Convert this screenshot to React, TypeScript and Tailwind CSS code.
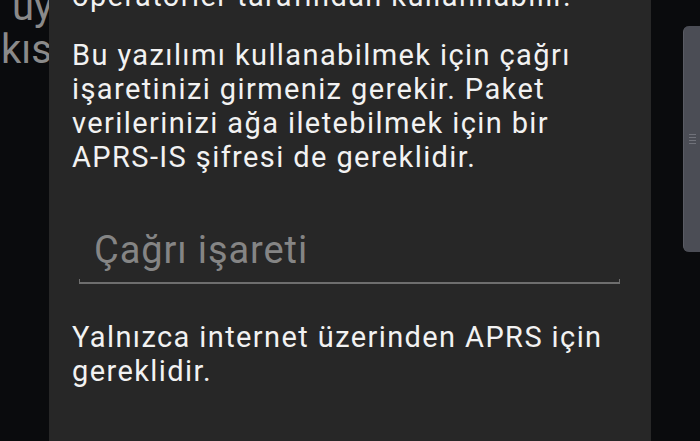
export default function App() {
    return (
        <div className="relative h-[441px] w-[700px] overflow-hidden bg-[#0a0b0d] font-['Roboto','Noto_Sans',sans-serif]">
            {/* settings list behind the dialog */}
            <div className="-mt-[15px] flex flex-col text-[40px] leading-[43px] text-[#8a8a8a]">
                <span className="pl-[12px]">uy</span>
                <span className="pl-[1px]">kıs</span>
            </div>

            {/* scrollbar thumb */}
            <div className="absolute right-0 top-[26px] flex h-[226px] w-[17px] items-center justify-center rounded-l-[6px] border-l border-[#5a5c64] bg-[#4b4d55]">
                <div className="flex w-[7px] flex-col gap-[2px]">
                    <div className="h-px bg-[#70727a]"></div>
                    <div className="h-px bg-[#70727a]"></div>
                    <div className="h-px bg-[#70727a]"></div>
                    <div className="h-px bg-[#70727a]"></div>
                </div>
            </div>

            {/* dialog */}
            <div className="absolute bottom-0 left-[49px] top-0 w-[602px] overflow-hidden bg-[#272727]">
                <div className="-mt-[21px] flex flex-col pl-[23px] pr-[20px] text-[29px] leading-[34px] tracking-[1.4px] text-[#f2f2f2]">
                    <p className="whitespace-nowrap">operatörler tarafından kullanılabilir.</p>
                    <p className="mt-[25px]">
                        Bu yazılımı kullanabilmek için çağrı işaretinizi girmeniz gerekir. Paket verilerinizi ağa iletebilmek için bir APRS-IS şifresi de gereklidir.
                    </p>

                    {/* callsign input */}
                    <div className="ml-[7px] mt-[53px] w-[541px]">
                        <div className="pl-[15px] text-[38px] leading-[46px] tracking-[0.9px] text-[#858585]">Çağrı işareti</div>
                        <div className="mt-[6px] h-[5px] border-x-[1.5px] border-b-2 border-[#6e6e6e]"></div>
                    </div>

                    <p className="mt-[36px]">
                        Yalnızca internet üzerinden APRS için gereklidir.
                    </p>
                </div>
            </div>
        </div>
    )
}
